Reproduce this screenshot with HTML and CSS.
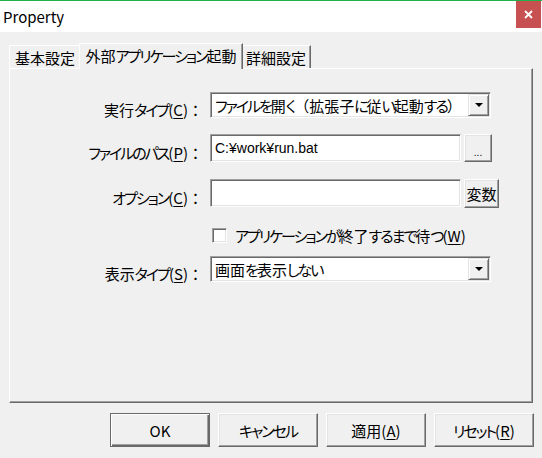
FILE: index.html
```html
<!DOCTYPE html>
<html lang="ja">
<head>
<meta charset="utf-8">
<title>Property</title>
<link rel="stylesheet" href="styles.css">
</head>
<body>
<div class="window">
  <div class="titlebar">
    <span class="title">Property</span>
    <div class="close">
      <svg width="9" height="9" viewBox="0 0 9 9"><path d="M1 1 L8 8 M8 1 L1 8" stroke="#fff" stroke-width="1.8" fill="none"/></svg>
    </div>
  </div>
  <div class="tabs">
    <div class="tab tab-first">基本設定</div>
    <div class="tab tab-active">外部<span class="kn">アプリケーション</span>起動</div>
    <div class="tab tab-last">詳細設定</div>
  </div>
  <div class="panel">
    <div class="form">
      <div class="row row1">
        <div class="label">実行<span class="kn">タイプ</span>(<span class="u">C</span>)<span class="fw">：</span></div>
        <div class="combo"><span class="combo-text"><span class="kn">ファイルを</span>開<span class="kn">く</span><span class="fw">（</span>拡張子<span class="kn">に</span>従<span class="kn">い</span>起動<span class="kn">する</span><span class="fw">）</span></span><div class="dd"><svg width="8" height="4" viewBox="0 0 8 4"><path d="M0 0 H8 L4 4 Z" fill="#000"/></svg></div></div>
      </div>
      <div class="row row2">
        <div class="label"><span class="kn">ファイルのパス</span>(<span class="u">P</span>)<span class="fw">：</span></div>
        <div class="input">C:¥work¥run.bat</div>
        <div class="btn btn-dots">...</div>
      </div>
      <div class="row row3">
        <div class="label"><span class="kn">オプション</span>(<span class="u">C</span>)<span class="fw">：</span></div>
        <div class="input"></div>
        <div class="btn btn-var">変数</div>
      </div>
      <div class="row row4">
        <div class="label"></div>
        <div class="check"></div>
        <div class="check-label"><span class="kn">アプリケーションが</span>終了<span class="kn">するまで</span>待<span class="kn">つ</span>(<span class="u">W</span>)</div>
      </div>
      <div class="row row5">
        <div class="label">表示<span class="kn">タイプ</span>(<span class="u">S</span>)<span class="fw">：</span></div>
        <div class="combo"><span class="combo-text">画面<span class="kn">を</span>表示<span class="kn">しない</span></span><div class="dd"><svg width="8" height="4" viewBox="0 0 8 4"><path d="M0 0 H8 L4 4 Z" fill="#000"/></svg></div></div>
      </div>
    </div>
  </div>
  <div class="buttons">
    <div class="btn dbtn default">OK</div>
    <div class="btn dbtn"><span class="kn">キャンセル</span></div>
    <div class="btn dbtn">適用(<span class="u">A</span>)</div>
    <div class="btn dbtn"><span class="kn">リセット</span>(<span class="u">R</span>)</div>
  </div>
</div>
</body>
</html>
```

FILE: styles.css
```css
* { box-sizing: border-box; }
html, body { margin: 0; padding: 0; }
body {
  width: 542px;
  height: 458px;
  overflow: hidden;
  background: #f0f0f0;
  font-family: "Noto Sans CJK JP", "Liberation Sans", sans-serif;
  font-size: 15px;
  color: #000;
  font-feature-settings: "palt";
}
.kn { letter-spacing: -2px; }
.fw { font-feature-settings: normal; }
.window {
  width: 542px;
  height: 458px;
  border-top: 1px solid #20b24a;
  display: flex;
  flex-direction: column;
  background: #f0f0f0;
}
.titlebar {
  height: 31px;
  flex: none;
  background: #fff;
  display: flex;
  align-items: flex-start;
  justify-content: space-between;
}
.title {
  padding-left: 3px;
  line-height: 31px;
  font-size: 15px;
}
.close {
  width: 25px;
  height: 27px;
  margin-right: 1px;
  background: #c75050;
  display: flex;
  align-items: center;
  justify-content: center;
}
.close svg { display: block; }

.tabs {
  flex: none;
  height: 25px;
  margin-top: 11px;
  padding-left: 9px;
  display: flex;
  align-items: flex-end;
  position: relative;
  z-index: 1;
}
.tab {
  height: 23px;
  background: #f0f0f0;
  border-top: 1px solid #fff;
  border-left: 1px solid #fff;
  border-right: 1px solid #696969;
  box-shadow: inset -1px 0 #a0a0a0;
  display: flex;
  align-items: center;
  justify-content: center;
  line-height: 1;
  padding-top: 1px;
  white-space: nowrap;
}
.tab-first { width: 72px; }
.tab-last { width: 70px; }
.tab-active {
  width: 164px;
  height: 26px;
  margin: 0 -2px -1px;
  position: relative;
  z-index: 2;
  padding-top: 0;
  padding-bottom: 3px;
}

.panel {
  flex: none;
  margin-left: 9px;
  width: 524px;
  height: 335px;
  border: 1px solid;
  border-color: #fff #696969 #696969 #fff;
  box-shadow: inset -1px -1px #a0a0a0;
}
.form {
  padding-top: 23px;
  display: flex;
  flex-direction: column;
}
.row {
  display: flex;
  align-items: center;
}
.row1 { height: 26px; }
.row2 { height: 28px; margin-top: 16px; }
.row3 { height: 28px; margin-top: 17px; }
.row4 { height: 22px; margin-top: 17px; }
.row5 { height: 26px; margin-top: 10px; }
.label {
  width: 193px;
  margin-right: 7px;
  text-align: right;
  padding-top: 8px;
  white-space: nowrap;
  flex: none;
}
.u { text-decoration: underline; text-underline-offset: 2px; }

.combo {
  width: 281px;
  height: 26px;
  background: #fff;
  border: 1px solid;
  border-color: #a0a0a0 #fff #fff #a0a0a0;
  box-shadow: inset 1px 1px #696969, inset -1px -1px #e3e3e3;
  padding: 1px;
  display: flex;
  align-items: center;
  flex: none;
}
.combo-text {
  flex: 1;
  padding-left: 3px;
  white-space: nowrap;
  overflow: hidden;
}
.dd {
  width: 21px;
  height: 22px;
  flex: none;
  background: #f0f0f0;
  border: 1px solid;
  border-color: #e3e3e3 #696969 #696969 #e3e3e3;
  box-shadow: inset 1px 1px #fff, inset -1px -1px #a0a0a0;
  display: flex;
  align-items: center;
  justify-content: center;
}
.dd svg { display: block; }
.input {
  width: 251px;
  height: 28px;
  flex: none;
  background: #fff;
  border: 1px solid;
  border-color: #a0a0a0 #fff #fff #a0a0a0;
  box-shadow: inset 1px 1px #696969, inset -1px -1px #e3e3e3;
  padding-left: 4px;
  display: flex;
  align-items: center;
  white-space: nowrap;
  font-family: "Liberation Sans", "Noto Sans CJK JP", sans-serif;
  font-size: 14px;
}
.btn {
  background: #f0f0f0;
  border: 1px solid;
  border-color: #fff #696969 #696969 #fff;
  box-shadow: inset -1px -1px #a0a0a0, inset 1px 1px #e3e3e3;
  display: flex;
  align-items: center;
  justify-content: center;
  white-space: nowrap;
  flex: none;
}
.btn-dots {
  width: 28px;
  height: 28px;
  margin-left: 3px;
  font-family: "Liberation Sans", sans-serif;
  font-size: 10px;
  padding-top: 8px;
}
.btn-var {
  width: 35px;
  height: 29px;
  margin-left: 3px;
  align-self: flex-start;
}
.check {
  width: 15px;
  height: 15px;
  margin-left: 2px;
  flex: none;
  background: #fff;
  border: 1px solid;
  border-color: #a0a0a0 #fff #fff #a0a0a0;
  box-shadow: inset 1px 1px #696969, inset -1px -1px #e3e3e3;
}
.check-label {
  margin-left: 8px;
  white-space: nowrap;
}

.buttons {
  flex: none;
  margin-top: 10px;
  padding-right: 8px;
  display: flex;
  justify-content: flex-end;
  gap: 8px;
}
.dbtn {
  width: 100px;
  height: 34px;
}
.default {
  border: 1px solid #696969;
  box-shadow: inset 1px 1px #fff, inset -1px -1px #696969, inset -2px -2px #a0a0a0;
}
```
